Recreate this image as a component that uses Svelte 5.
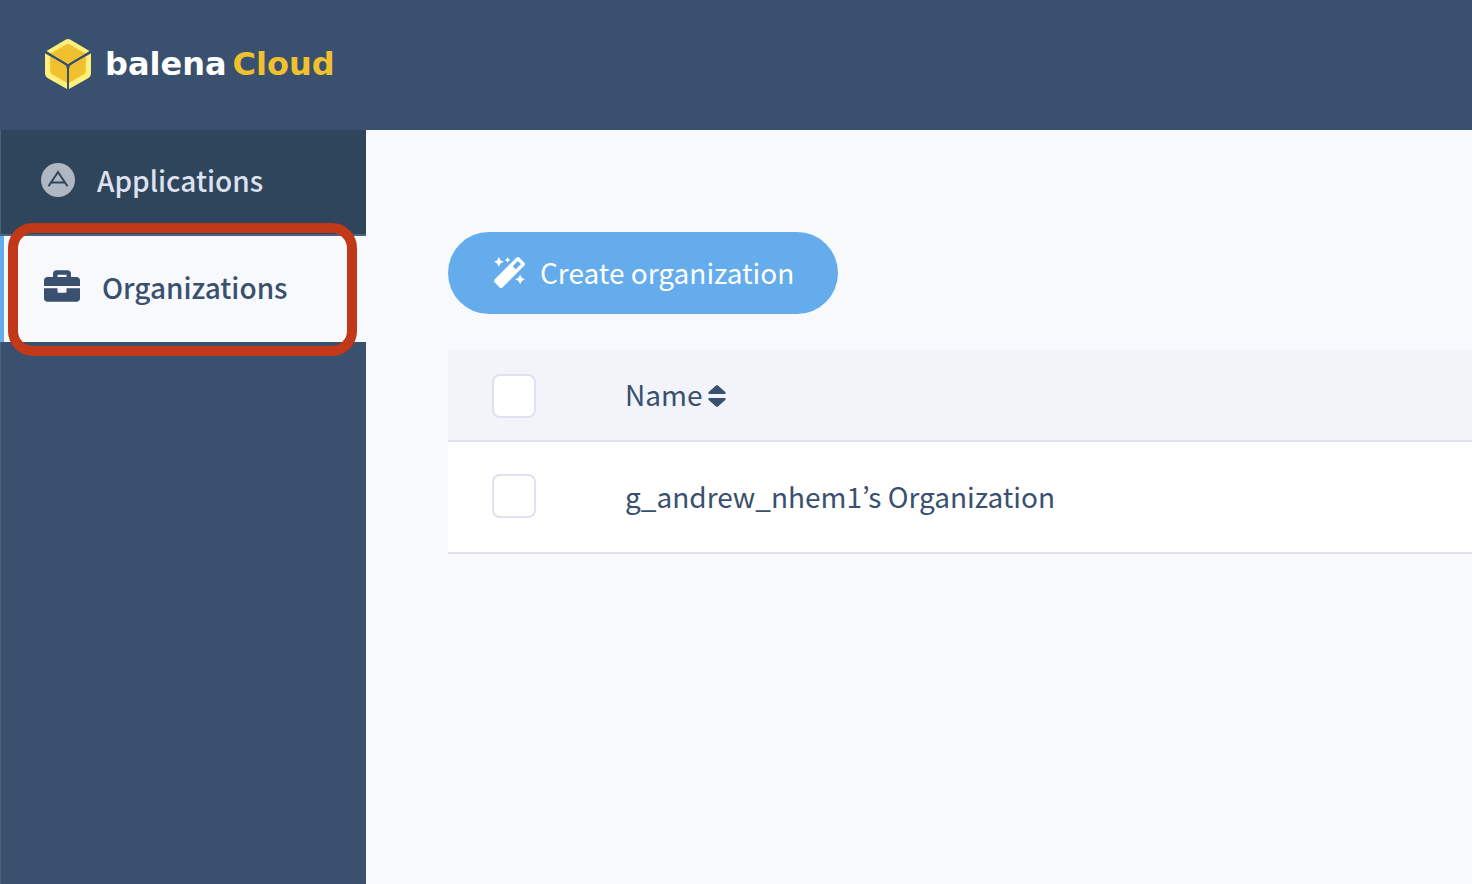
<script>
  const organizations = ['g_andrew_nhem1’s Organization'];
  let checked = $state(organizations.map(() => false));
  let ascending = $state(true);

  function toggleAll(event) {
    checked = checked.map(() => event.currentTarget.checked);
  }
</script>

<div class="page">
  <header>
    <a class="brand" href="#home">
      <svg width="46" height="50" viewBox="0 0 46 50" aria-hidden="true">
        <path fill="#fff07c" d="M20.500 .8Q23-.6 25.500 .8L44.500 12 23 25 1.500 12Z" />
        <path fill="#f0c02f" d="M20.800 5.700Q23 4.400 25.200 5.700L40.500 14.500 23 25 5.500 14.500Z" />
        <path fill="#fff07c" d="M0 14.200 22 27.300V50L2.500 39Q0 37.500 0 34.500Z" />
        <path fill="#f0c02f" d="M5.200 17.200 22 27.300V44L7 35.300Q5.200 34.200 5.200 32Z" />
        <path fill="#fff07c" d="M46 14.200 24 27.300V50L43.500 39Q46 37.500 46 34.500Z" />
        <path fill="#f0c02f" d="M40.800 17.200 24 27.300V44L39 35.300Q40.800 34.200 40.800 32Z" />
        <path fill="none" stroke="#39506e" stroke-width="2" d="M0 12.800 20 24.500Q23 26.500 23 30V50M46 12.800 26 24.500Q23 26.500 23 30" />
      </svg>
      <span class="wordmark">balena<strong>Cloud</strong></span>
    </a>
  </header>

  <div class="body">
    <nav>
      <a class="item apps" href="#applications">
        <svg width="34" height="34" viewBox="0 0 34 34" aria-hidden="true">
          <circle cx="17" cy="17" r="17" fill="#afb7c3" />
          <path d="M7.500 23.300 17 9 26.500 23.300M10.500 19.500H23.500" fill="none" stroke="#2f455c" stroke-width="2" />
        </svg>
        <span>Applications</span>
      </a>
      <a class="item active" href="#organizations" aria-current="page">
        <svg width="36" height="36" viewBox="0 0 512 512" fill="currentColor" aria-hidden="true">
          <path d="M320 336c0 8.840-7.160 16-16 16h-96c-8.840 0-16-7.160-16-16v-48H0v144c0 25.600 22.400 48 48 48h416c25.600 0 48-22.400 48-48V288H320v48zm144-208h-80V80c0-25.600-22.400-48-48-48H176c-25.600 0-48 22.400-48 48v48H48c-25.600 0-48 22.400-48 48v80h512v-80c0-25.600-22.400-48-48-48zm-144 0H192V96h128v32z" />
        </svg>
        <span>Organizations</span>
      </a>
    </nav>

    <main>
      <button class="create" type="button">
        <svg width="31" height="31" viewBox="0 0 512 512" fill="currentColor" aria-hidden="true">
          <path d="M224 96l16-32 32-16-32-16-16-32-16 32-32 16 32 16 16 32zM80 160l26.660-53.330L160 80l-53.340-26.670L80 0 53.340 53.330 0 80l53.340 26.670L80 160zm352 128l-26.660 53.330L352 368l53.340 26.670L432 448l26.660-53.330L512 368l-53.340-26.670L432 288zm70.620-193.770L417.770 9.380C411.530 3.120 403.340 0 395.150 0c-8.190 0-16.380 3.120-22.630 9.380L9.380 372.520c-12.500 12.500-12.500 32.760 0 45.250l84.850 84.850c6.250 6.250 14.440 9.370 22.620 9.370 8.190 0 16.380-3.120 22.630-9.370l363.140-363.150c12.500-12.480 12.500-32.750 0-45.240zM359.450 203.460l-50.910-50.910 86.600-86.600 50.910 50.910-86.600 86.600z" />
        </svg>
        <span>Create organization</span>
      </button>

      <table>
        <thead>
          <tr>
            <th class="pick"><input type="checkbox" aria-label="Select all organizations" onchange={toggleAll} /></th>
            <th>
              <button class="sort" type="button" onclick={() => (ascending = !ascending)}>
                Name
                <svg width="18" height="22" viewBox="0 0 18 22" fill="currentColor" aria-hidden="true">
                  <path d="M8 .5Q9-.4 10 .5L17.300 7Q18.200 9 17 9H1Q-.2 9 .7 7ZM8 21.500Q9 22.400 10 21.500L17.300 15Q18.200 13 17 13H1Q-.2 13 .7 15Z" />
                </svg>
              </button>
            </th>
          </tr>
        </thead>
        <tbody>
          {#each organizations as name, i}
            <tr>
              <td class="pick"><input type="checkbox" aria-label={name} bind:checked={checked[i]} /></td>
              <td>{name}</td>
            </tr>
          {/each}
        </tbody>
      </table>
    </main>
  </div>
</div>

<style>
  :global(body) {
    margin: 0;
  }

  .page {
    display: flex;
    flex-direction: column;
    min-height: 100vh;
    box-sizing: border-box;
    background: #f8f9fd;
    color: #39506e;
    font-family: 'Noto Sans CJK KR', 'Noto Sans', sans-serif;
    font-size: 28px;
    line-height: 40px;
  }

  header {
    display: flex;
    align-items: center;
    box-sizing: border-box;
    min-height: 130px;
    padding: 0 45px 2px;
    background: #39506e;
  }

  .brand {
    display: flex;
    align-items: center;
    gap: 14px;
    color: #fff;
    text-decoration: none;
  }

  .wordmark {
    display: flex;
    gap: 6px;
    font-family: 'DejaVu Sans', sans-serif;
    font-size: 32px;
    font-weight: 700;
  }

  .wordmark strong {
    color: #f0c02f;
  }

  .body {
    display: flex;
    flex: 1;
  }

  nav {
    flex: 0 0 366px;
    box-sizing: border-box;
    border-left: 1px solid #4b6079;
    background: #39506e;
  }

  .item {
    display: flex;
    align-items: center;
    gap: 22px;
    padding: 30px 40px 34px;
    font-weight: 500;
    text-decoration: none;
  }

  .apps {
    border-bottom: 2px solid #4b6380;
    background: #2f455c;
    color: #dde1f0;
  }

  .active {
    position: relative;
    margin-left: -1px;
    padding: 31px 40px 35px;
    border-left: 4px solid #64acec;
    background: #f8f9fd;
    color: #39506e;
  }

  .active svg {
    margin-bottom: 2px;
  }

  .active::after {
    content: '';
    position: absolute;
    inset: -13px 9px -14px 4px;
    border: 10px solid #c13918;
    border-radius: 25px;
  }

  main {
    flex: 1;
    min-width: 0;
    padding: 102px 0 40px 82px;
  }

  button {
    display: flex;
    align-items: center;
    border: 0;
    font: inherit;
    cursor: pointer;
  }

  .create {
    gap: 15px;
    margin-bottom: 36px;
    padding: 20px 44px 22px 46px;
    border-radius: 41px;
    background: #64acec;
    color: #fff;
  }

  .sort {
    gap: 6px;
    padding: 0;
    background: none;
    color: inherit;
  }

  .sort svg {
    margin-top: 4px;
  }

  table {
    width: 100%;
    border-collapse: separate;
    border-spacing: 0;
  }

  th,
  td {
    height: 108px;
    padding: 0 0 2px;
    border-bottom: 2px solid #dde1f0;
    background: #fff;
    font-weight: 400;
    text-align: left;
    vertical-align: middle;
  }

  th {
    height: 88px;
    background: #f3f4fa;
  }

  .pick {
    width: 133px;
    padding-left: 44px;
  }

  th.pick {
    padding-top: 2px;
    padding-bottom: 0;
  }

  input {
    display: block;
    appearance: none;
    box-sizing: border-box;
    width: 44px;
    height: 44px;
    margin: 0;
    border: 2px solid #dde1f0;
    border-radius: 8px;
    background: #fff;
  }

  input:checked {
    background: #64acec;
  }
</style>
